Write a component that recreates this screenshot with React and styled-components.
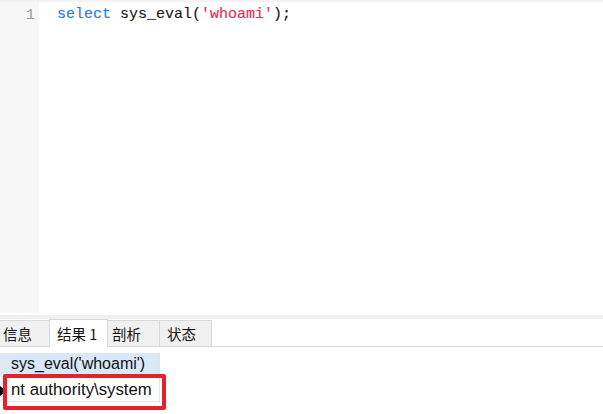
import styled, { createGlobalStyle } from "styled-components";

const GlobalStyle = createGlobalStyle`
  html, body {
    margin: 0;
    padding: 0;
    background: #fff;
    overflow: hidden;
  }
`;

const Page = styled.div`
  width: 603px;
  height: 414px;
  display: flex;
  flex-direction: column;
  background: #fff;
`;

const Editor = styled.div`
  height: 313px;
  display: flex;
`;

const Gutter = styled.div`
  width: 39px;
  background: #f7f7f7;
  border-top: 2px solid #f2f2f2;
  box-sizing: border-box;
  padding: 3px 4px 0 0;
  text-align: right;
  font-family: "Liberation Mono", "DejaVu Sans Mono", monospace;
  font-size: 15.5px;
  line-height: 20px;
  color: #9a9a9a;
`;

const Code = styled.div`
  flex: 1;
  border-top: 2px solid #f3f3f3;
  padding: 3px 0 0 18px;
  font-family: "Liberation Mono", "DejaVu Sans Mono", monospace;
  font-size: 15px;
  line-height: 20px;
  color: #1a1a1a;
  white-space: pre;
  -webkit-text-stroke: 0.15px currentColor;
`;

const Token = styled.span`
  color: ${({ $kind }) =>
    $kind === "kw" ? "#2a7ae4" : $kind === "str" ? "#ec2a55" : "#1a1a1a"};
`;

const Splitter = styled.div`
  height: 4px;
  margin-top: 2px;
  background: #f0f0f0;
`;

const TabBar = styled.div`
  height: 28px;
  display: flex;
  align-items: flex-end;
  border-bottom: 1px solid #d6d6d6;
  box-sizing: border-box;
  font-family: "Noto Sans CJK SC", "Liberation Sans", sans-serif;
  font-size: 14.5px;
`;

const Tab = styled.div`
  box-sizing: border-box;
  height: ${({ $active }) => ($active ? "28px" : "26px")};
  margin-bottom: ${({ $active }) => ($active ? "-1px" : "0")};
  width: ${({ $w }) => $w}px;
  display: flex;
  align-items: center;
  padding-left: ${({ $pl }) => $pl}px;
  background: ${({ $active }) => ($active ? "#fff" : "#f0f0f0")};
  border: 1px solid #d9d9d9;
  border-bottom: none;
  border-left: ${({ $first }) => ($first ? "none" : "1px solid #d9d9d9")};
  margin-left: -1px;
  color: #111;
  &:first-child {
    margin-left: 0;
  }
`;

const Results = styled.div`
  position: relative;
  padding-top: 6px;
  font-family: "Liberation Sans", Arial, sans-serif;
  color: #111;
`;

const Row = styled.div`
  display: flex;
  height: ${({ $h }) => $h}px;
`;

const RowHead = styled.div`
  width: 8px;
  position: relative;
  background: ${({ $header }) => ($header ? "#dde8f5" : "#eef1f5")};
`;

const Cell = styled.div`
  width: 152px;
  box-sizing: border-box;
  padding: ${({ $header }) => ($header ? "0 0 0 3px" : "4px 0 0 3px")};
  display: flex;
  align-items: center;
  font-size: ${({ $header }) => ($header ? "16px" : "16.8px")};
  background: ${({ $header }) => ($header ? "#d9e8f8" : "#fff")};
  border-bottom: 1px solid ${({ $header }) => ($header ? "#d9e8f8" : "#e6e6e6")};
  border-right: 1px solid #e3e3e3;
`;

const Pointer = styled.div`
  position: absolute;
  left: 0;
  top: 11px;
  width: 0;
  height: 0;
  border-top: 5px solid transparent;
  border-bottom: 5px solid transparent;
  border-left: 6px solid #000;
`;

const Highlight = styled.div`
  position: absolute;
  left: 3px;
  top: 27px;
  width: 163px;
  height: 36px;
  box-sizing: border-box;
  border: 4px solid #e8202c;
  border-radius: 2px;
  pointer-events: none;
`;

export default function App() {
  return (
    <Page>
      <GlobalStyle />
      <Editor>
        <Gutter>1</Gutter>
        <Code>
          <Token $kind="kw">select</Token> sys_eval(<Token $kind="str">'whoami'</Token>);
        </Code>
      </Editor>
      <Splitter />
      <TabBar>
        <Tab $w={50} $pl={3} $first>信息</Tab>
        <Tab $w={59} $pl={7} $active>结果 1</Tab>
        <Tab $w={53} $pl={4}>剖析</Tab>
        <Tab $w={53} $pl={7}>状态</Tab>
      </TabBar>
      <Results>
        <Row $h={22}>
          <RowHead $header />
          <Cell $header>sys_eval('whoami')</Cell>
        </Row>
        <Row $h={27}>
          <RowHead>
            <Pointer />
          </RowHead>
          <Cell>nt authority\system</Cell>
        </Row>
        <Highlight />
      </Results>
    </Page>
  );
}
